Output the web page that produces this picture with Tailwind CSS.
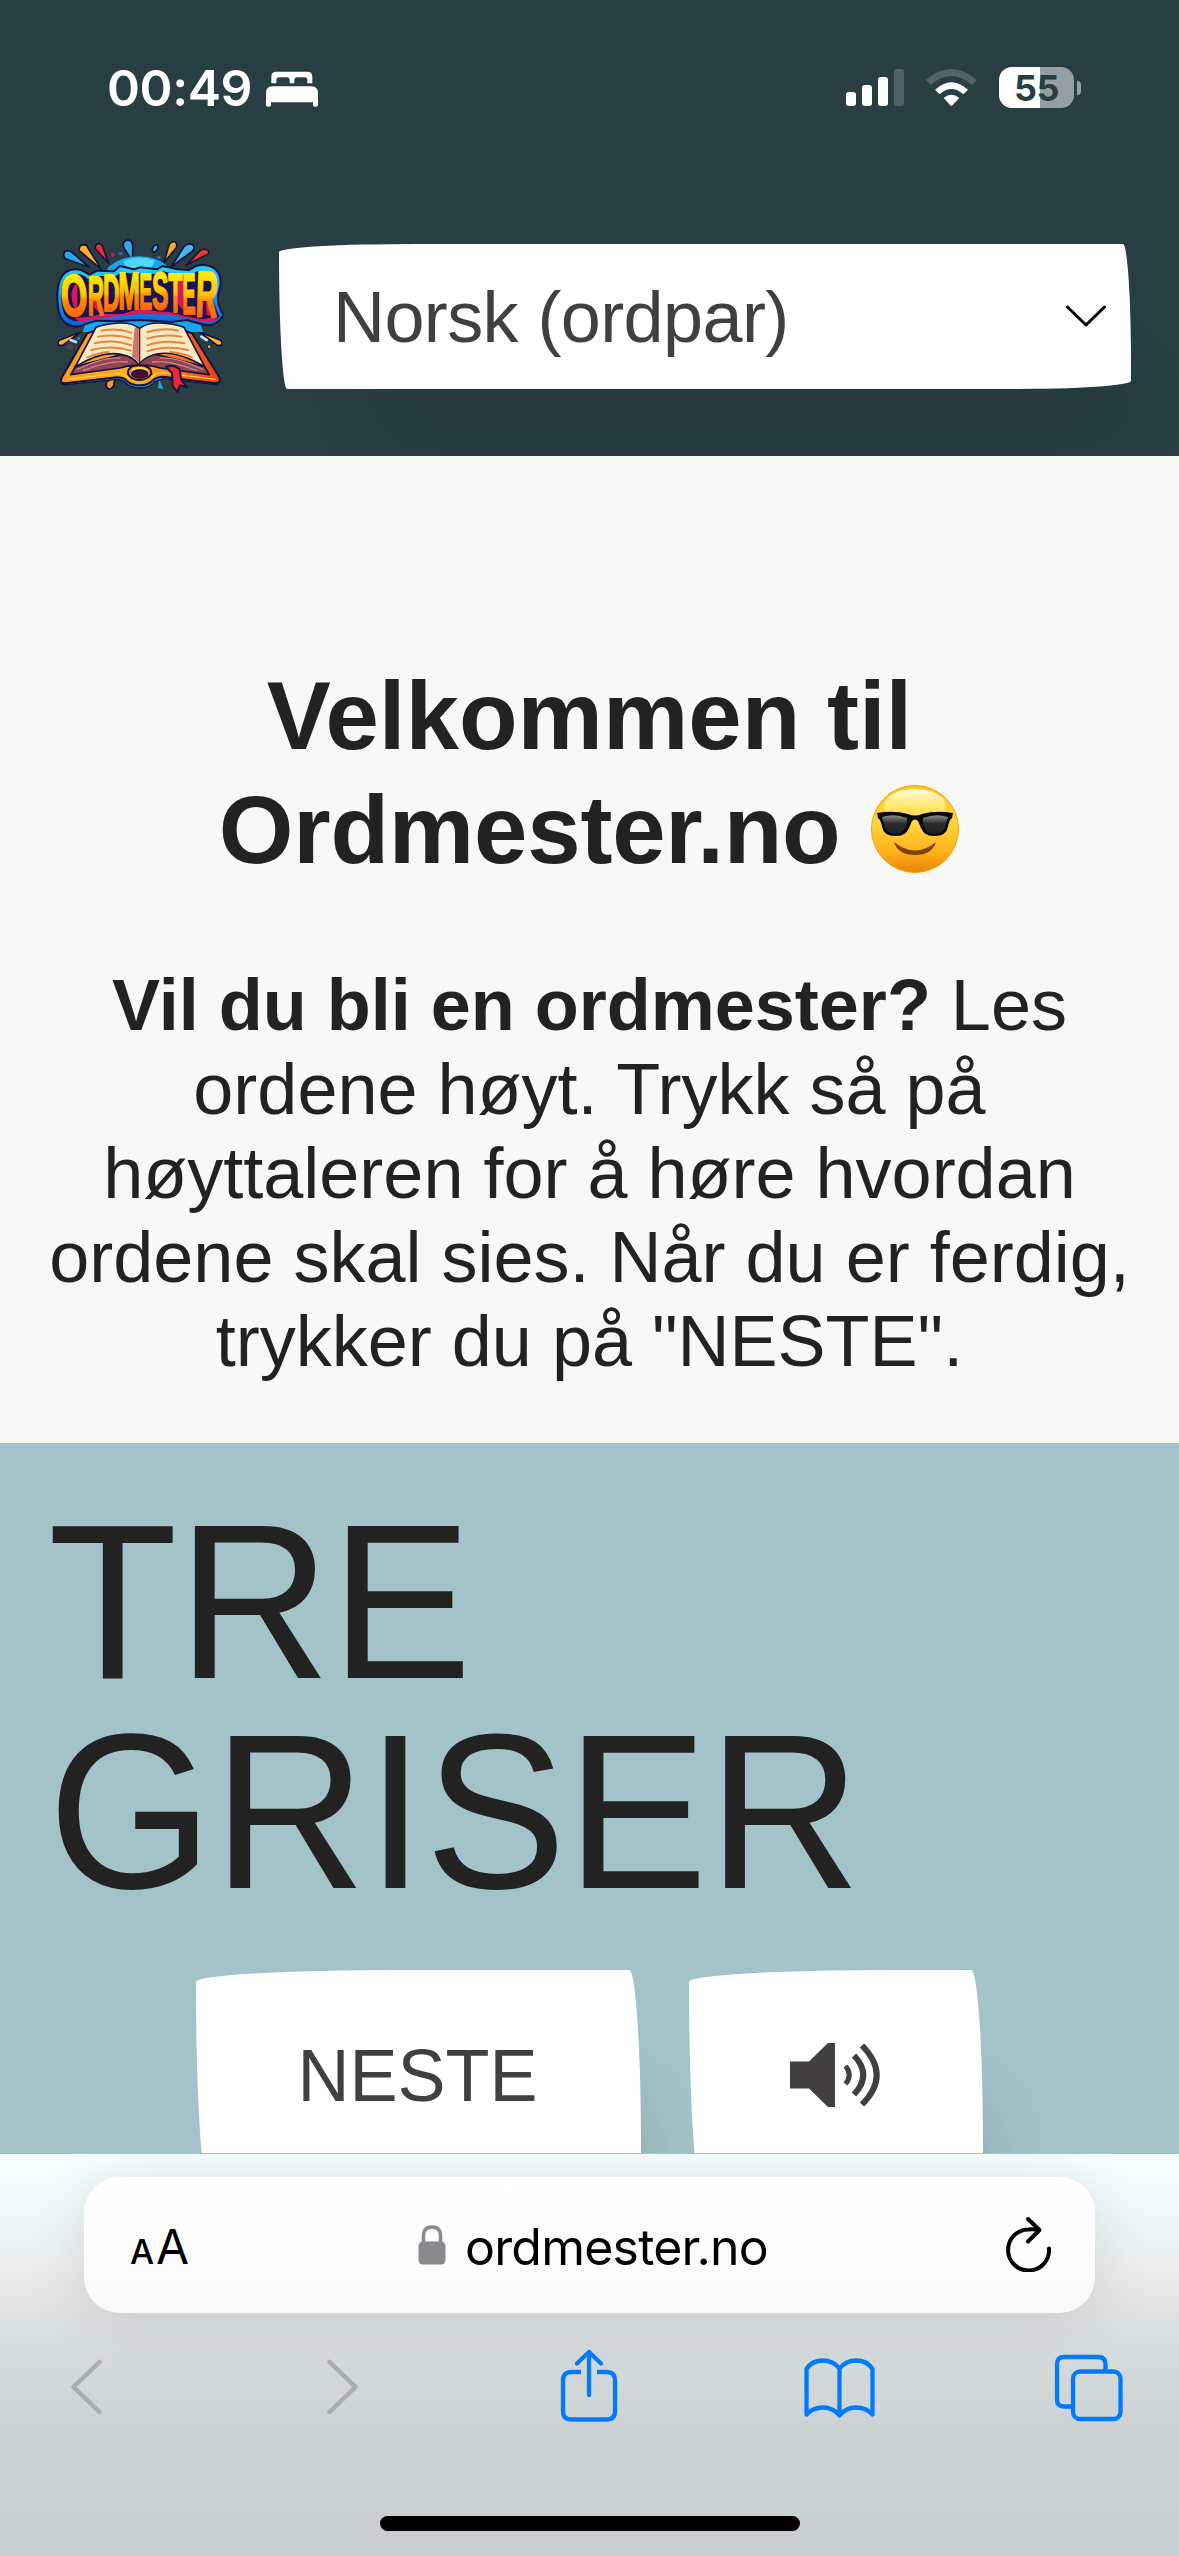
<!DOCTYPE html>
<html lang="no">
<head>
<meta charset="utf-8">
<title>Ordmester.no</title>
<script src="https://cdn.jsdelivr.net/npm/@tailwindcss/browser@4"></script>
</head>
<body class="flex h-[2556px] w-[1179px] flex-col overflow-hidden bg-[#f8f9f4] font-['Liberation_Sans',Arial,sans-serif] text-[#222222]">

<header class="h-[456px] shrink-0 overflow-hidden bg-[#283e43]">
  <!-- Status bar -->
  <div class="flex h-[175px] items-center pr-[98px] pl-[107px] text-white">
    <span class="w-[159px] font-[Inter,sans-serif] text-[50px] leading-none font-semibold tracking-[-0.4px] whitespace-nowrap">00:49</span>
    <svg class="mt-0.5 h-[36px] w-[52px]" viewBox="0 0 156 108" fill="#fff">
      <path d="M16 37V17Q16 2 31 2H124Q139 2 139 17V37H124V27Q124 19 116 19H94Q85 19 85 28V37H71V28Q71 19 62 19H39Q31 19 31 27V37Z"/>
      <path d="M0 66Q0 46 20 46H136Q156 46 156 66V101Q156 107 150 107H147Q141 107 141 101V94H15V101Q15 107 9 107H6Q0 107 0 101Z"/>
    </svg>
    <div class="ml-auto flex items-center">
      <div class="mr-[22px] flex h-[37px] items-end gap-1.5">
        <i class="h-[14px] w-2.5 rounded-[3px] bg-white"></i>
        <i class="h-[21px] w-2.5 rounded-[3px] bg-white"></i>
        <i class="h-[29px] w-2.5 rounded-[3px] bg-white"></i>
        <i class="h-[37px] w-2.5 rounded-[3px] bg-white/20"></i>
      </div>
      <svg class="mr-[22px] h-[37px] w-[51px]" viewBox="0 0 153 111">
        <path d="M0 33Q75 -33 153 33L138 48Q76 -6 15 48Z" fill="#fff" opacity=".2"/>
        <path d="M27 62Q76 17 126 62L112 76Q76 44 41 76Z" fill="#fff"/>
        <path d="M53 87Q76 67 100 87L79 109Q76 112 73 109Z" fill="#fff"/>
      </svg>
      <div class="flex h-[41px] w-[75px] items-center justify-center rounded-[13px] bg-linear-to-r from-white from-[54.6%] to-[#949fa1] to-[54.6%] font-[Inter,sans-serif] text-[36px] leading-none font-bold tracking-[-0.6px] text-[#283e43]">55</div>
      <i class="ml-[3px] h-3.5 w-1 rounded-r-full bg-[#949fa1]"></i>
    </div>
  </div>

  <!-- Site navigation -->
  <div class="flex items-start pt-[45px] pl-10">
    <svg class="h-[190px] w-[200px] shrink-0" viewBox="0 0 600 570" stroke-linejoin="round" stroke-linecap="round">
      <defs>
        <linearGradient id="gold" x1="0" y1="0" x2="0" y2="1">
          <stop offset=".2" stop-color="#ffe900"/><stop offset=".5" stop-color="#ffc300"/><stop offset=".58" stop-color="#ff8a00"/><stop offset=".9" stop-color="#ff5a10"/>
        </linearGradient>
        <linearGradient id="rim" x1="0" y1="0" x2="0" y2="1">
          <stop offset="0" stop-color="#25d5f5"/><stop offset="1" stop-color="#0b62d8"/>
        </linearGradient>
        <linearGradient id="cover" x1="0" y1="0" x2="1" y2="0">
          <stop offset="0" stop-color="#ff9a1c"/><stop offset=".5" stop-color="#ffb01f"/><stop offset="1" stop-color="#f2361d"/>
        </linearGradient>
      </defs>
      <!-- Splashes -->
      <g stroke="#15123f" stroke-width="5">
        <path d="M148 142L76 116Q66 103 76 94Q86 88 96 97Z" fill="#25a9ea"/>
        <path d="M184 148L118 92Q115 76 130 74Q142 74 144 84Z" fill="#ffae1e"/>
        <path d="M206 130L166 86Q164 72 177 71Q187 72 189 84Z" fill="#f22c3a"/>
        <path d="M278 124L253 86Q244 68 259 61Q277 58 278 76Z" fill="#28a9e8"/>
        <path d="M341 98Q332 86 344 76L353 74Q358 88 341 98Z" fill="#28c5f2"/>
        <path d="M372 128L386 78Q392 62 406 66Q414 74 408 84Z" fill="#ffa41d"/>
        <path d="M394 140L432 80Q446 66 460 76Q466 88 454 96Z" fill="#45b5f1"/>
        <path d="M438 136L480 92Q496 82 506 94Q508 104 496 106Z" fill="#f5382b"/>
        <path d="M122 336L60 360Q50 366 57 376L68 376Z" fill="#ffb42a"/>
        <path d="M478 336L540 360Q550 366 543 376L532 376Z" fill="#ffb42a"/>
        <path d="M230 462L200 486Q194 502 208 508Q222 504 222 490Z" fill="#f79a2a"/>
      </g>
      <path d="M358 478L354 504L370 508Z" fill="#1ba7e2"/>
      <g fill="#15416e"><circle cx="306" cy="87" r="6"/><circle cx="65" cy="329" r="6"/><circle cx="155" cy="494" r="5"/><circle cx="536" cy="329" r="4"/></g>
      <circle cx="218" cy="104" r="6" fill="#d71c3b"/><circle cx="242" cy="100" r="5" fill="#1479d8"/><circle cx="357" cy="112" r="5" fill="#1479d8"/>
      <circle cx="91" cy="380" r="9" fill="#54424a"/><circle cx="508" cy="380" r="6" fill="#f6a83b" stroke="#15123f" stroke-width="3"/>
      <circle cx="116" cy="355" r="4" fill="#168ce2"/>
      <path d="M92 360L108 366M484 350L500 360" stroke="#bfe5f5" stroke-width="8"/>
      <!-- Backdrop -->
      <path d="M205 142Q242 108 298 109Q350 110 382 138L480 310L490 336L128 336L140 300Z" fill="#17a6f0"/>
      <path d="M250 124Q295 102 345 122L330 150H262Z" fill="#4dd8ff"/>
      <path d="M54 262C46 200 58 148 106 148C130 148 140 160 148 164L172 152L222 154L240 138L282 148L300 142L350 148L368 138L414 148L446 150L468 138Q500 130 524 146Q550 166 538 212Q530 232 536 254L550 286Q526 326 484 312L440 300L395 306L300 300L220 304L170 302L112 320Q60 318 54 262Z" fill="url(#rim)" stroke="#15123f" stroke-width="6"/>
      <path d="M66 258C58 205 70 164 108 162C130 162 138 172 146 178L170 168L226 168L244 158L300 160L350 162L370 154L412 164L448 168L470 154Q530 148 528 192Q526 216 514 228L538 290Q520 308 486 298L440 290L395 282L300 278L220 284L168 292L110 304Q70 300 66 258Z" fill="#1c1350"/>
      <g fill="#d6185f"><path d="M104 294L148 290L186 282L246 282L300 266L350 274L390 276L432 288L486 298L530 290L522 306L480 304L394 284L296 282L200 292L120 306Z"/><path d="M94 222Q98 200 112 188V270Q96 264 94 222ZM160 240L184 262L176 276L162 262ZM410 186H430V270L412 250ZM496 232L520 286H500Z"/></g>
      <!-- Lettering -->
      <g font-family="Liberation Sans, sans-serif" font-weight="700" font-size="100" fill="url(#gold)" stroke="url(#gold)" stroke-width="3.500">
        <text transform="translate(65 289) rotate(-3) scale(1.03 1.75)">O</text>
        <text transform="translate(143 284) scale(.68 1.68)">R</text>
        <text transform="translate(189 274) scale(.69 1.58)">D</text>
        <text transform="translate(235 267) scale(.78 1.54)">M</text>
        <text transform="translate(298 266) scale(.58 1.52)">E</text>
        <text transform="translate(336 267) scale(.74 1.56)">S</text>
        <text transform="translate(385 275) scale(.70 1.66)">T</text>
        <text transform="translate(427 283) scale(.60 1.74)">E</text>
        <text transform="translate(466 289) rotate(2) scale(.90 1.93)">R</text>
      </g>
      <!-- Book -->
      <path d="M142 340L66 472Q54 494 78 494L230 478Q246 478 254 486Q270 504 300 504Q330 504 346 484L372 476L526 494Q548 490 538 472L456 340Z" fill="#2f94d5" stroke="#15123f" stroke-width="4"/>
      <path d="M142 340L66 472Q56 490 76 490L230 472Q252 472 260 482Q276 496 300 496Q324 496 340 480Q350 470 370 470L524 490Q546 488 538 472L456 340L440 334L158 334Z" fill="url(#cover)" stroke="#15123f" stroke-width="6"/>
      <path d="M84 478L232 460Q256 462 266 474M526 478L368 458Q346 458 336 472" fill="none" stroke="#ffd338" stroke-width="4"/>
      <path d="M106 440L92 464L240 444Q270 434 296 438Q330 432 360 444L508 464L494 440L296 390Z" fill="#8d4454" stroke="#15123f" stroke-width="5"/>
      <path d="M112 448Q190 410 240 414M130 452Q210 420 262 426M488 448Q410 410 360 414M470 452Q390 420 338 426" stroke="#d4838b" stroke-width="4" fill="none"/>
      <path d="M298 326Q278 308 240 309Q200 310 168 322L106 440Q188 390 246 404Q280 410 296 434Q314 410 350 402Q410 390 494 440L432 322Q400 310 360 309Q320 308 298 326Z" fill="#f8ebc0" stroke="#15123f" stroke-width="5"/>
      <path d="M298 326V432Q292 418 276 410L284 322Z" fill="#cb776f"/><path d="M299 326V434" stroke="#4b2545" stroke-width="4"/>
      <path d="M184 332Q230 322 274 338M174 350Q226 340 274 356M164 370Q220 356 274 376M154 390Q214 374 272 392M142 412Q176 398 206 396M322 336Q370 322 414 332M322 356Q370 340 424 350M322 376Q370 358 434 370M322 394Q376 374 444 390M390 396Q424 398 456 412" stroke="#e8844b" stroke-width="6" fill="none"/>
      <path d="M264 462Q262 436 298 436Q334 436 334 462Q322 480 298 480Q274 480 264 462Z" fill="#ff8e1c" stroke="#15123f" stroke-width="6"/>
      <path d="M278 450Q298 438 320 450" stroke="#ffd94b" stroke-width="6" fill="none"/>
      <ellipse cx="299" cy="462" rx="24" ry="12" fill="#4d0c38" stroke="#15123f" stroke-width="4"/>
      <path d="M378 440Q400 432 418 446L424 480L442 502L420 496L412 516L398 498L396 460Z" fill="#f6242d" stroke="#15123f" stroke-width="6"/>
    </svg>

    <div class="mt-[24px] ml-[39px] flex h-[145px] w-[852px] items-center justify-between rounded-[765px_45px_675px_45px/45px_675px_45px_765px] bg-white pr-[25px] pl-[54px] shadow-[45px_84px_75px_-54px_rgba(0,0,0,0.2)]">
      <span class="text-[72px] leading-none tracking-[-0.6px] text-[#41403e]">Norsk (ordpar)</span>
      <svg class="-mt-px h-[22px] w-[40px]" viewBox="0 0 40 22" fill="none" stroke="#000" stroke-width="3" stroke-linecap="round" stroke-linejoin="round"><path d="M1.5 2L20 20L38.500 2"/></svg>
    </div>
  </div>
</header>

<!-- Introduction -->
<main class="h-[987px] shrink-0 pt-[203px] text-center">
  <h1 class="text-[96px] leading-[114px] font-bold">Velkommen til<br><span class="tracking-[-0.2px]">Ordmester.no</span>
    <svg class="ml-[3px] inline-block h-[90px] w-[90px] align-[-11px]" viewBox="0 0 90 90" role="img" aria-label="😎">
      <defs>
        <linearGradient id="face" x1="0" y1="0" x2="0" y2="1"><stop offset="0" stop-color="#ffc81f"/><stop offset=".45" stop-color="#ffd53c"/><stop offset=".75" stop-color="#ffb21d"/><stop offset="1" stop-color="#e88404"/></linearGradient>
        <linearGradient id="gloss" x1="0" y1="0" x2="0" y2="1"><stop offset="0" stop-color="#fffde0"/><stop offset="1" stop-color="#ffe84e" stop-opacity=".3"/></linearGradient>
        <linearGradient id="lens" x1="0" y1="0" x2="0" y2="1"><stop offset="0" stop-color="#8d8d8f"/><stop offset=".45" stop-color="#2c2c2e"/><stop offset="1" stop-color="#202022"/></linearGradient>
      </defs>
      <circle cx="45" cy="45" r="43.500" fill="url(#face)" stroke="#f5a10b"/>
      <ellipse cx="45" cy="22" rx="31" ry="17" fill="url(#gloss)"/>
      <path d="M24 58Q45 75 66 58Q62 71 45 71Q28 71 24 58Z" fill="#80430a"/>
      <path d="M7 29Q24 26 38 30Q45 33 52 30Q66 26 83 29L82 34Q79 36 78 43Q76 52 65 52Q55 53 51 44L48 37Q45 34 42 37L39 44Q35 53 25 52Q14 52 12 43Q11 36 8 34Z" fill="#080808"/>
      <path d="M12 33Q24 29 37 34Q39 43 30 49Q18 52 15 43ZM78 33Q66 29 53 34Q51 43 60 49Q72 52 75 43Z" fill="url(#lens)"/>
    </svg>
  </h1>
  <p class="mt-[76px] text-[72px] leading-[84px]"><b>Vil du bli en ordmester?</b> Les<br>ordene høyt. Trykk så på<br>høyttaleren for å høre hvordan<br>ordene skal sies. Når du er ferdig,<br>trykker du på "NESTE".</p>
</main>

<!-- Word card -->
<section class="h-[710px] shrink-0 overflow-hidden bg-[#a3c3c8] pt-[57px]">
  <div class="pl-12 text-[212px] leading-[210px]">
    <span class="block origin-[0_178px] scale-y-[1.04]">TRE</span>
    <span class="block origin-[0_178px] scale-y-[1.04]">GRISER</span>
  </div>
  <div class="mt-[50px] flex gap-12 pl-[196px]">
    <button class="flex h-[213px] w-[445px] items-center justify-center rounded-[765px_45px_675px_45px/45px_675px_45px_765px] bg-white pr-0.5 pb-[3px] text-[72px] leading-none text-[#41403e] shadow-[45px_84px_75px_-54px_rgba(0,0,0,0.2)]"><span class="scale-y-[1.04]">NESTE</span></button>
    <button class="flex h-[213px] w-[294px] items-center justify-center rounded-[765px_45px_675px_45px/45px_675px_45px_765px] bg-white pr-0.5 shadow-[45px_84px_75px_-54px_rgba(0,0,0,0.2)]" aria-label="Les opp">
      <svg class="-mt-1 h-[64px] w-[90px]" viewBox="0 0 90 64" fill="none" stroke="#41403e">
        <path d="M0 18.500H19L38 0H45V64H38L19 45.500H0Z" fill="#41403e" stroke="none"/>
        <path d="M55.500 23Q63 32 55.500 41" stroke-width="5"/>
        <path d="M64 12.500Q82.500 32 64 51.500" stroke-width="6"/>
        <path d="M72 2.500Q101.500 32 72 61.500" stroke-width="6"/>
      </svg>
    </button>
  </div>
</section>

<!-- Browser toolbar -->
<footer class="flex grow flex-col overflow-hidden border-t border-[#b4bbbd] bg-[linear-gradient(180deg,#f7ffff_0px,#f2f9fb_50px,#e9eeed_115px,#dde2e2_160px,#d5dada_200px,#cbd1d3_290px,#c9cfd1_403px)]">
  <div class="mx-[84px] mt-[23px] flex h-[136px] shrink-0 items-center rounded-[36px] bg-linear-to-b from-white to-[#f8faf9] pr-[43px] pl-[46px] font-[Inter,sans-serif] text-black shadow-[0_6px_60px_rgba(0,0,0,0.11)]">
    <span class="flex w-[60px] items-baseline gap-[2px] pt-[3px] leading-none"><span class="text-[34px] font-medium">A</span><span class="text-[48px]">A</span></span>
    <svg class="ml-[228px] h-[40px] w-[28px]" viewBox="0 0 28 40"><path d="M5.500 18V11Q5.500 2 14 2Q22.500 2 22.500 11V18" fill="none" stroke="#8a8a8e" stroke-width="3.500"/><rect x=".5" y="16.500" width="27" height="23" rx="4.500" fill="#8a8a8e"/></svg>
    <span class="mt-[3px] ml-[19px] text-[50px] leading-none tracking-[-0.8px]">ordmester.no</span>
    <svg class="-mt-[3px] ml-auto h-[56px] w-[46px]" viewBox="0 0 46 56" fill="none" stroke="#000" stroke-width="4" stroke-linecap="round" stroke-linejoin="round"><path d="M43 32.500A20.500 20.500 0 1 1 22.500 13.500Q28 13 33 14"/><path d="M22 3L33.500 14L22 25.500"/></svg>
  </div>
  <div class="mt-[34px] flex h-[78px] shrink-0 items-center pl-[70px] text-[#007aff]">
    <svg class="mt-0.5 h-[56px] w-[33px]" viewBox="0 0 33 56" fill="none" stroke="#a9aeae" stroke-width="4.500" stroke-linecap="round" stroke-linejoin="round"><path d="M29.500 3L3.500 28L29.500 53"/></svg>
    <svg class="mt-0.5 ml-[223px] h-[56px] w-[33px]" viewBox="0 0 33 56" fill="none" stroke="#a9aeae" stroke-width="4.500" stroke-linecap="round" stroke-linejoin="round"><path d="M3.500 3L29.500 28L3.500 53"/></svg>
    <svg class="ml-[201px] h-[74px] w-[58px]" viewBox="0 0 58 74" fill="none" stroke="currentColor" stroke-width="4.300" stroke-linecap="round" stroke-linejoin="round"><path d="M21 23H11.500Q3 23 3 31V62Q3 70.500 11.500 70.500H46.500Q55 70.500 55 62V31Q55 23 46.500 23H37" stroke-linecap="butt"/><path d="M29 46V3M17 14.500L29 3L41 14.500"/></svg>
    <svg class="mt-[3px] ml-[185px] h-[62px] w-[73px]" viewBox="0 0 73 62" fill="none" stroke="currentColor" stroke-width="4.300" stroke-linecap="round" stroke-linejoin="round"><path d="M36.500 11.500C32 6 26 3.500 20 3.500C13 3.500 7 6.500 3.500 12V57.500C8 52.500 14 50.500 20 50.500C26 50.500 32 53 36.500 58.500C41 53 47 50.500 53 50.500C59 50.500 65 52.500 69.500 57.500V12C66 6.500 60 3.500 53 3.500C47 3.500 41 6 36.500 11.500ZV58.500"/></svg>
    <svg class="mt-[3px] ml-[178px] h-[68px] w-[69px]" viewBox="0 0 69 68" fill="none" stroke="currentColor" stroke-width="4.300"><path d="M17 52.500H10Q3 52.500 3 45.500V10.500Q3 3 10 3H44.500Q51.500 3 51.500 10.500V17"/><rect x="19" y="17.500" width="47.500" height="47.500" rx="7"/></svg>
  </div>
  <div class="mx-auto mt-[91px] h-[15px] w-[420px] shrink-0 rounded-full bg-black"></div>
</footer>
</body>
</html>
